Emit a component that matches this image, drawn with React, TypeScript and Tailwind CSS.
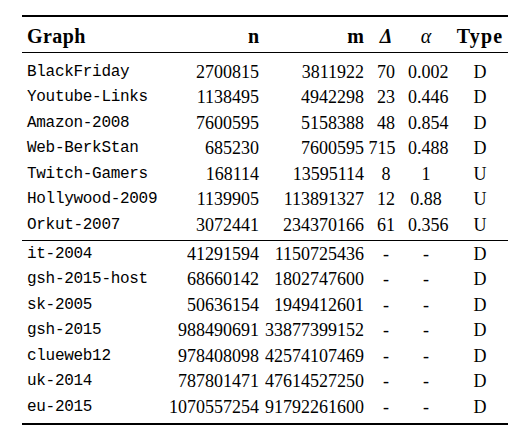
import React from "react";

type Row = {
  graph: string;
  n: string;
  m: string;
  delta: string;
  alpha: string;
  type: string;
  shift?: boolean;
};

const SMALL: Row[] = [
  { graph: "BlackFriday", n: "2700815", m: "3811922", delta: "70", alpha: "0.002", type: "D" },
  { graph: "Youtube-Links", n: "1138495", m: "4942298", delta: "23", alpha: "0.446", type: "D" },
  { graph: "Amazon-2008", n: "7600595", m: "5158388", delta: "48", alpha: "0.854", type: "D" },
  { graph: "Web-BerkStan", n: "685230", m: "7600595", delta: "715", alpha: "0.488", type: "D", shift: true },
  { graph: "Twitch-Gamers", n: "168114", m: "13595114", delta: "8", alpha: "1", type: "U" },
  { graph: "Hollywood-2009", n: "1139905", m: "113891327", delta: "12", alpha: "0.88", type: "U" },
  { graph: "Orkut-2007", n: "3072441", m: "234370166", delta: "61", alpha: "0.356", type: "U" }
];

const LARGE: Row[] = [
  { graph: "it-2004", n: "41291594", m: "1150725436", delta: "-", alpha: "-", type: "D" },
  { graph: "gsh-2015-host", n: "68660142", m: "1802747600", delta: "-", alpha: "-", type: "D" },
  { graph: "sk-2005", n: "50636154", m: "1949412601", delta: "-", alpha: "-", type: "D" },
  { graph: "gsh-2015", n: "988490691", m: "33877399152", delta: "-", alpha: "-", type: "D" },
  { graph: "clueweb12", n: "978408098", m: "42574107469", delta: "-", alpha: "-", type: "D" },
  { graph: "uk-2014", n: "787801471", m: "47614527250", delta: "-", alpha: "-", type: "D" },
  { graph: "eu-2015", n: "1070557254", m: "91792261600", delta: "-", alpha: "-", type: "D" }
];

const COLS = "grid grid-cols-[138px_99px_105px_44px_44px_56px]";

function DataRow({ row }: { row: Row }) {
  return (
    <div className={`${COLS} h-[25.5px] items-center text-[18px] leading-none`}>
      <div className="pl-[5px] font-['Liberation_Mono',monospace] text-[16px] tracking-[-0.3px]">
        {row.graph}
      </div>
      <div className="text-right">{row.n}</div>
      <div className="text-right">{row.m}</div>
      <div className={row.shift ? "pr-[8px] text-center" : "text-center"}>{row.delta}</div>
      <div className={row.shift ? "pr-[26px] text-center" : "pr-[8px] text-center"}>
        {row.alpha}
      </div>
      <div className="text-center">{row.type}</div>
    </div>
  );
}

export default function App() {
  return (
    <div className="h-[430px] w-[508px] overflow-hidden bg-white font-['Liberation_Serif',serif] text-black">
      <div className="ml-[22px] w-[486px] pt-[15px]">
        <div className="h-[2px] bg-black" />

        <div className={`${COLS} h-[35px] items-center pt-[2px] text-[20px] font-bold leading-none`}>
          <div className="pl-[5px] tracking-[0.4px]">Graph</div>
          <div className="text-right">n</div>
          <div className="text-right">m</div>
          <div className="text-center italic">Δ</div>
          <div className="pr-[8px] text-center font-normal italic">α</div>
          <div className="text-center tracking-[1.2px]">Type</div>
        </div>

        <div className="h-px bg-black" />

        <div className="pt-[6px] pb-[2.5px]">
          {SMALL.map((row) => (
            <DataRow key={row.graph} row={row} />
          ))}
        </div>

        <div className="h-px bg-black" />

        <div className="pb-[3.5px]">
          {LARGE.map((row) => (
            <DataRow key={row.graph} row={row} />
          ))}
        </div>

        <div className="h-[2px] bg-black" />
      </div>
    </div>
  );
}
